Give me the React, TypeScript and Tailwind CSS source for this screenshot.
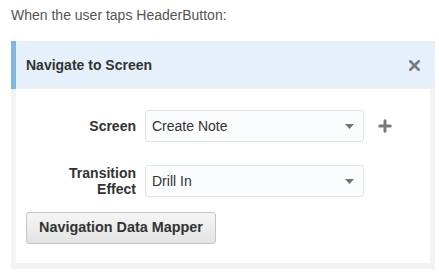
import { X, Plus } from "lucide-react";

function Caret() {
  return (
    <svg width="9" height="5" viewBox="0 0 9 5" className="shrink-0">
      <path d="M0 0h9L4.5 5z" fill="#6f7378" />
    </svg>
  );
}

function Select({ value }: { value: string }) {
  return (
    <div className="flex h-[32px] w-[219px] items-center justify-between rounded-[3px] border border-[#dfe3e8] bg-[#fbfcfe] pl-[6px] pr-[9px] text-[14px] text-[#333]">
      <span>{value}</span>
      <Caret />
    </div>
  );
}

export default function App() {
  return (
    <div className="h-[274px] w-[439px] bg-white font-['Liberation_Sans',Arial,sans-serif]">
      <div className="px-[11px] pt-[7px] text-[14px] leading-[16px] text-[#555]">
        When the user taps HeaderButton:
      </div>

      <div className="ml-[11px] mt-[18px] w-[424px] bg-[#f3f3f3] pb-[6px]">
        {/* Header */}
        <div className="flex h-[48px] items-center justify-between border-l-[5px] border-[#7fb6e4] bg-[#e6f0fa] pl-[10px] pr-[12px]">
          <span className="text-[14px] font-bold text-[#333]">
            Navigate to Screen
          </span>
          <X size={17} strokeWidth={3.6} className="text-[#7a7a7a]" />
        </div>

        {/* Body */}
        <div className="mx-[5px] bg-white px-[10px] pb-[19px] pt-[21px]">
          <div className="grid grid-cols-[110px_219px_auto] items-center gap-x-[9px] gap-y-[23px]">
            <div className="text-right text-[14px] font-bold text-[#333]">
              Screen
            </div>
            <Select value="Create Note" />
            <Plus size={18} strokeWidth={4} className="ml-[3px] text-[#7a7a7a]" />

            <div className="text-right text-[14px] font-bold leading-[16px] text-[#333]">
              Transition
              <br />
              Effect
            </div>
            <Select value="Drill In" />
            <div />
          </div>

          <button
            type="button"
            className="mt-[15px] h-[32px] w-[190px] rounded-[3px] border border-[#c5c5c5] bg-gradient-to-b from-[#f6f6f6] to-[#e3e3e3] text-[14.4px] font-bold text-[#333]"
          >
            Navigation Data Mapper
          </button>
        </div>
      </div>
    </div>
  );
}
